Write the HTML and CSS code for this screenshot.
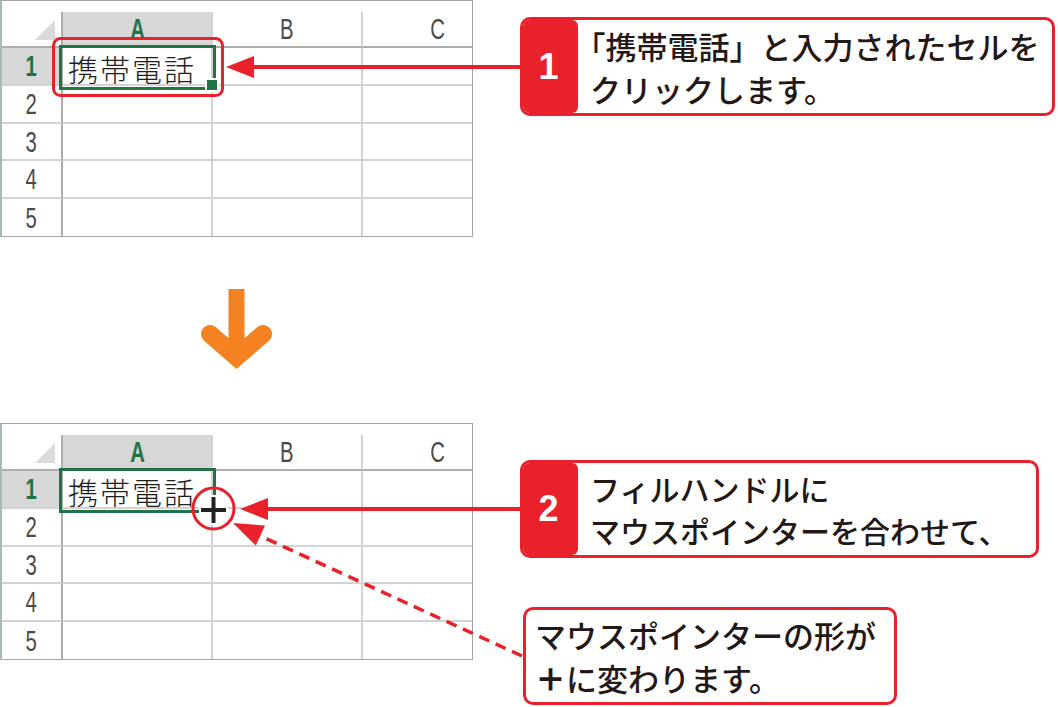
FILE: index.html
```html
<!DOCTYPE html>
<html lang="ja">
<head>
<meta charset="utf-8">
<title>フィルハンドル</title>
<link rel="stylesheet" href="styles.css">
</head>
<body>
<div class="page">
  <section class="step">
    <div class="sheet">
      <div class="sheet-top"></div>
      <div class="grid">
        <div class="corner"><svg width="59" height="34" viewBox="0 0 59 34"><polygon points="33,28 53,28 53,8" fill="#dadada"/></svg></div>
        <div class="hd sel"><span class="hl">A</span></div>
        <div class="hd"><span class="hl">B</span></div>
        <div class="hd"><span class="hl">C</span></div>

        <div class="rh sel"><span class="hl">1</span></div>
        <div class="cell a1"><span class="val">携帯電話</span><div class="selbox"></div><div class="handle"></div></div>
        <div class="cell"></div>
        <div class="cell"></div>

        <div class="rh"><span class="hl">2</span></div>
        <div class="cell"></div><div class="cell"></div><div class="cell"></div>

        <div class="rh"><span class="hl">3</span></div>
        <div class="cell"></div><div class="cell"></div><div class="cell"></div>

        <div class="rh"><span class="hl">4</span></div>
        <div class="cell"></div><div class="cell"></div><div class="cell"></div>

        <div class="rh last"><span class="hl">5</span></div>
        <div class="cell last"></div><div class="cell last"></div><div class="cell last"></div>
      </div>
    </div>
    <div class="callout c1">
      <div class="num">1</div>
      <p class="ctext"><span class="bk">「</span>携帯電話」と入力されたセルを<br>クリックします。</p>
    </div>
  </section>

  <div class="down">
    <svg width="90" height="90" viewBox="0 0 90 90">
      <rect x="38.5" y="2" width="16" height="62" fill="#f58220"/>
      <polyline points="20,47 46.5,70 73,47" fill="none" stroke="#f58220" stroke-width="18" stroke-linecap="round" stroke-linejoin="miter"/>
    </svg>
  </div>

  <section class="step">
    <div class="sheet">
      <div class="sheet-top"></div>
      <div class="grid">
        <div class="corner"><svg width="59" height="34" viewBox="0 0 59 34"><polygon points="33,28 53,28 53,8" fill="#dadada"/></svg></div>
        <div class="hd sel"><span class="hl">A</span></div>
        <div class="hd"><span class="hl">B</span></div>
        <div class="hd"><span class="hl">C</span></div>

        <div class="rh sel"><span class="hl">1</span></div>
        <div class="cell a1"><span class="val">携帯電話</span><div class="selbox"></div></div>
        <div class="cell"></div>
        <div class="cell"></div>

        <div class="rh"><span class="hl">2</span></div>
        <div class="cell"></div><div class="cell"></div><div class="cell"></div>

        <div class="rh"><span class="hl">3</span></div>
        <div class="cell"></div><div class="cell"></div><div class="cell"></div>

        <div class="rh"><span class="hl">4</span></div>
        <div class="cell"></div><div class="cell"></div><div class="cell"></div>

        <div class="rh last"><span class="hl">5</span></div>
        <div class="cell last"></div><div class="cell last"></div><div class="cell last"></div>
      </div>
    </div>
    <div class="notes">
      <div class="callout c2">
        <div class="num">2</div>
        <p class="ctext">フィルハンドルに<br>マウスポインターを合わせて、</p>
      </div>
      <div class="callout c3">
        <p class="ctext">マウスポインターの形が<br><span class="plus">＋</span>に変わります。</p>
      </div>
    </div>
  </section>

  <svg class="overlay" width="1058" height="707" viewBox="0 0 1058 707">
    <!-- step 1 -->
    <rect x="53.5" y="38.5" width="169" height="57" rx="7" fill="none" stroke="#e8212a" stroke-width="3"/>
    <line x1="250" y1="67" x2="521" y2="67" stroke="#e8212a" stroke-width="4"/>
    <polygon points="226,67 254,56 254,78" fill="#e8212a"/>
    <!-- step 2 cursor -->
    <rect x="199" y="505" width="29" height="10" fill="#fff"/>
    <rect x="208.5" y="495" width="10" height="30" fill="#fff"/>
    <rect x="201" y="508" width="25" height="4" fill="#222"/>
    <rect x="211.5" y="497" width="4" height="26" fill="#222"/>
    <circle cx="213.5" cy="508.5" r="20.5" fill="none" stroke="#e8212a" stroke-width="3"/>
    <line x1="264" y1="509" x2="521" y2="509" stroke="#e8212a" stroke-width="4"/>
    <polygon points="240,509 268,498 268,520" fill="#e8212a"/>
    <line x1="522" y1="656" x2="256" y2="534" stroke="#e8212a" stroke-width="3.5" stroke-dasharray="11 7"/>
    <polygon points="233,523 265,525.5 255.7,545.5" fill="#e8212a"/>
  </svg>
</div>
</body>
</html>
```

FILE: styles.css
```css
body {
  margin: 0;
  width: 1058px;
  height: 707px;
  overflow: hidden;
  background: #fff;
  font-family: "Noto Sans CJK JP", sans-serif;
}

.page {
  position: relative;
  width: 1058px;
  height: 707px;
}

.step {
  display: flex;
  align-items: flex-start;
}

/* spreadsheet */
.sheet {
  width: 473px;
  box-sizing: border-box;
  border: 1px solid #a3a3a3;
  border-left: 2px solid #a7bcae;
  overflow: hidden;
  background: #fff;
  flex: none;
}

.sheet-top {
  height: 11px;
}

.grid {
  display: grid;
  grid-template-columns: 61px 150px 150px 150px;
  grid-template-rows: 36px 38px 38px 37px 38px 37px;
}

.grid > div {
  box-sizing: border-box;
  display: flex;
  align-items: center;
}

.corner {
  border-right: 2px solid #adadad;
  border-bottom: 2px solid #adadad;
}

.corner svg {
  display: block;
}

.hd {
  justify-content: center;
  border-right: 2px solid #d3d3d3;
  border-bottom: 2px solid #adadad;
}

.rh {
  justify-content: center;
  border-right: 2px solid #adadad;
  border-bottom: 2px solid #d3d3d3;
}

.cell {
  border-right: 2px solid #d3d3d3;
  border-bottom: 2px solid #d3d3d3;
}

.grid > .last {
  border-bottom: 0;
}

.sel {
  background: #d7d7d7;
}

.hl {
  display: inline-block;
  font-family: "Liberation Sans", Arial, sans-serif;
  font-size: 29px;
  line-height: 30px;
  font-weight: 400;
  color: #4a4a4a;
  transform: scaleX(0.7);
}

.sel .hl {
  color: #217346;
  font-weight: 700;
}

.a1 {
  position: relative;
}

.val {
  padding-left: 5px;
  padding-top: 4px;
  font-size: 30px;
  line-height: 34px;
  font-weight: 300;
  letter-spacing: 2px;
  color: #1e1e1e;
  white-space: nowrap;
}

.selbox {
  position: absolute;
  left: -4px;
  top: -3px;
  width: 157px;
  height: 45px;
  box-sizing: border-box;
  border: 3px solid #217346;
}

.handle {
  position: absolute;
  left: 142px;
  top: 30px;
  width: 10px;
  height: 10px;
  background: #217346;
  border: 2px solid #fff;
}

/* callouts */
.callout {
  box-sizing: border-box;
  border: 3px solid #e8212a;
  border-radius: 10px;
  background: #fff;
  display: flex;
  overflow: hidden;
  flex: none;
}

.num {
  width: 55px;
  flex: none;
  background: #e8212a;
  color: #fff;
  font-family: "Liberation Sans", Arial, sans-serif;
  font-weight: 700;
  font-size: 36px;
  display: flex;
  align-items: center;
  justify-content: center;
  border-radius: 0 6px 6px 0;
  padding-right: 4px;
  box-sizing: border-box;
}

.ctext {
  margin: 0;
  align-self: center;
  padding-left: 12px;
  font-size: 30px;
  line-height: 43px;
  font-weight: 500;
  color: #231815;
  white-space: nowrap;
}

.bk {
  font-feature-settings: "halt";
}

.plus {
  font-weight: 900;
}

.c1 {
  width: 535px;
  height: 99px;
  margin: 17px 0 0 47px;
}

.c1 .ctext {
  font-size: 31px;
}

.notes {
  display: flex;
  flex-direction: column;
  margin-left: 47px;
}

.c2 {
  width: 519px;
  height: 98px;
  margin-top: 37px;
}

.c2 .ctext {
  line-height: 42px;
}

.c3 {
  width: 374px;
  height: 98px;
  margin: 49px 0 0 3px;
}

.c3 .ctext {
  padding-left: 9px;
  font-size: 31px;
  line-height: 43px;
}

/* down arrow */
.down {
  height: 186px;
  box-sizing: border-box;
  padding: 50px 0 0 190px;
}

.down svg {
  display: block;
}

/* annotation layer */
.overlay {
  position: absolute;
  left: 0;
  top: 0;
  pointer-events: none;
}
```
